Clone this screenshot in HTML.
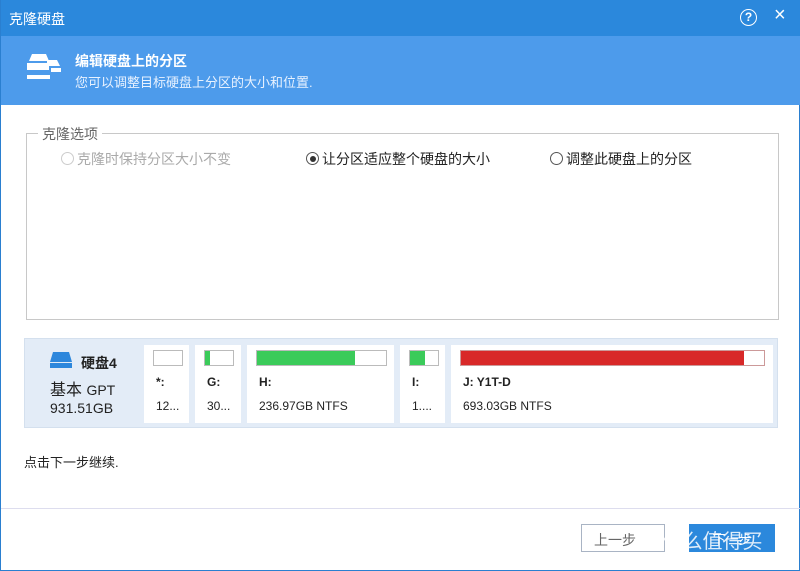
<!DOCTYPE html><html><head><meta charset="utf-8"><style>
*{margin:0;padding:0;box-sizing:border-box}
body{width:800px;height:571px;position:relative;background:#fff;font-family:"Liberation Sans","Noto Sans CJK SC",sans-serif;font-size:13px;color:#222;overflow:hidden;border:1px solid #2a7fd0;border-top:none}
.a{position:absolute}
.tb{left:0;top:0;width:800px;height:36px;background:#2b88dc;color:#fff;font-size:14px;padding:9px 8px}
.hd{left:0;top:36px;width:800px;height:69px;background:#4d9beb;color:#fff}
.p{top:345px;height:78px;background:#fff}
.bar{top:350px;height:16px;border:1px solid #bbb;background:#fff}
.l1{top:375px;font-weight:bold;font-size:12px}
.l2{top:399px;font-size:12px}
.rad{display:inline-block;width:13px;height:13px;border:1px solid #555;border-radius:50%;vertical-align:-1px;margin-right:3px;position:relative}
.opt{top:149px;font-size:14px}
</style></head><body>
<div class="a tb">克隆硬盘</div>
<div class="a" style="left:739px;top:9px;width:17px;height:17px;border:1.5px solid #fff;border-radius:50%;color:#fff;font-size:12px;text-align:center;line-height:14px;font-weight:bold">?</div>
<div class="a" style="left:773px;top:4px;color:#fff;font-size:20px">×</div>
<div class="a hd">
 <svg class="a" style="left:24px;top:18px" width="40" height="32"><path d="M7 0h14l3 7H4z" fill="#fff"/><rect x="2" y="9" width="22" height="7" fill="#fff"/><path d="M22 6h10l3 6H22z" fill="#fff"/><rect x="26" y="14" width="10" height="4" fill="#fff"/><rect x="2" y="21" width="23" height="4" fill="#fff"/></svg>
 <div class="a" style="left:74px;top:15px;font-weight:bold;font-size:14px">编辑硬盘上的分区</div>
 <div class="a" style="left:74px;top:36px;font-size:13px;color:#e8f2ff">您可以调整目标硬盘上分区的大小和位置.</div>
</div>
<div class="a" style="left:25px;top:133px;width:753px;height:187px;border:1px solid #c8c8c8"></div>
<div class="a" style="left:37px;top:124px;background:#fff;padding:0 4px;color:#666;font-size:14px">克隆选项</div>
<div class="a opt" style="left:60px;color:#aaa"><span class="rad" style="border-color:#ccc"></span>克隆时保持分区大小不变</div>
<div class="a opt" style="left:305px"><span class="rad"><span class="a" style="left:2.5px;top:2.5px;width:6px;height:6px;border-radius:50%;background:#333"></span></span>让分区适应整个硬盘的大小</div>
<div class="a opt" style="left:549px"><span class="rad"></span>调整此硬盘上的分区</div>
<div class="a" style="left:23px;top:338px;width:754px;height:90px;background:#e3ecf7;border:1px solid #d4e0ee"></div>
<svg class="a" style="left:48px;top:352px" width="24" height="16"><path d="M4 0h16l3 10H1z" fill="#2d87dc"/><rect x="1" y="11" width="22" height="5" fill="#2d87dc"/></svg>
<div class="a" style="left:80px;top:353px;font-weight:bold;font-size:14px">硬盘4</div>
<div class="a" style="left:49px;top:376px;font-size:16px">基本 <span style="font-size:14px">GPT</span></div>
<div class="a" style="left:49px;top:400px;font-size:14px">931.51GB</div>
<div class="a p" style="left:143px;width:45px"></div>
<div class="a bar" style="left:152px;width:30px"></div>
<div class="a l1" style="left:155px">*:</div><div class="a l2" style="left:155px">12...</div>
<div class="a p" style="left:194px;width:46px"></div>
<div class="a bar" style="left:203px;width:30px"><div style="width:5px;height:100%;background:#3bcb5a"></div></div>
<div class="a l1" style="left:206px">G:</div><div class="a l2" style="left:206px">30...</div>
<div class="a p" style="left:246px;width:147px"></div>
<div class="a bar" style="left:255px;width:131px"><div style="width:98px;height:100%;background:#3bcb5a"></div></div>
<div class="a l1" style="left:258px">H:</div><div class="a l2" style="left:258px">236.97GB NTFS</div>
<div class="a p" style="left:399px;width:45px"></div>
<div class="a bar" style="left:408px;width:30px"><div style="width:15px;height:100%;background:#3bcb5a"></div></div>
<div class="a l1" style="left:411px">I:</div><div class="a l2" style="left:411px">1....</div>
<div class="a p" style="left:450px;width:322px"></div>
<div class="a bar" style="left:459px;width:305px;border-color:#c99"><div style="width:283px;height:100%;background:#d82828"></div></div>
<div class="a l1" style="left:462px">J: Y1T-D</div><div class="a l2" style="left:462px">693.03GB NTFS</div>
<div class="a" style="left:23px;top:452px">点击下一步继续.</div>
<div class="a" style="left:0;top:508px;width:800px;height:1px;background:#dde"></div>
<div class="a" style="left:580px;top:524px;width:84px;height:28px;border:1px solid #a9b4c4;color:#666;padding:5px 12px;font-size:14px">上一步</div>
<div class="a" style="left:688px;top:524px;width:86px;height:28px;background:#2b88dc;color:#fff;text-align:center;padding-top:5px">下一步</div>
<div class="a" style="left:636px;top:525px;color:rgba(255,255,255,.85);font-size:20px;white-space:nowrap">值 什么值得买</div>
</body></html>
